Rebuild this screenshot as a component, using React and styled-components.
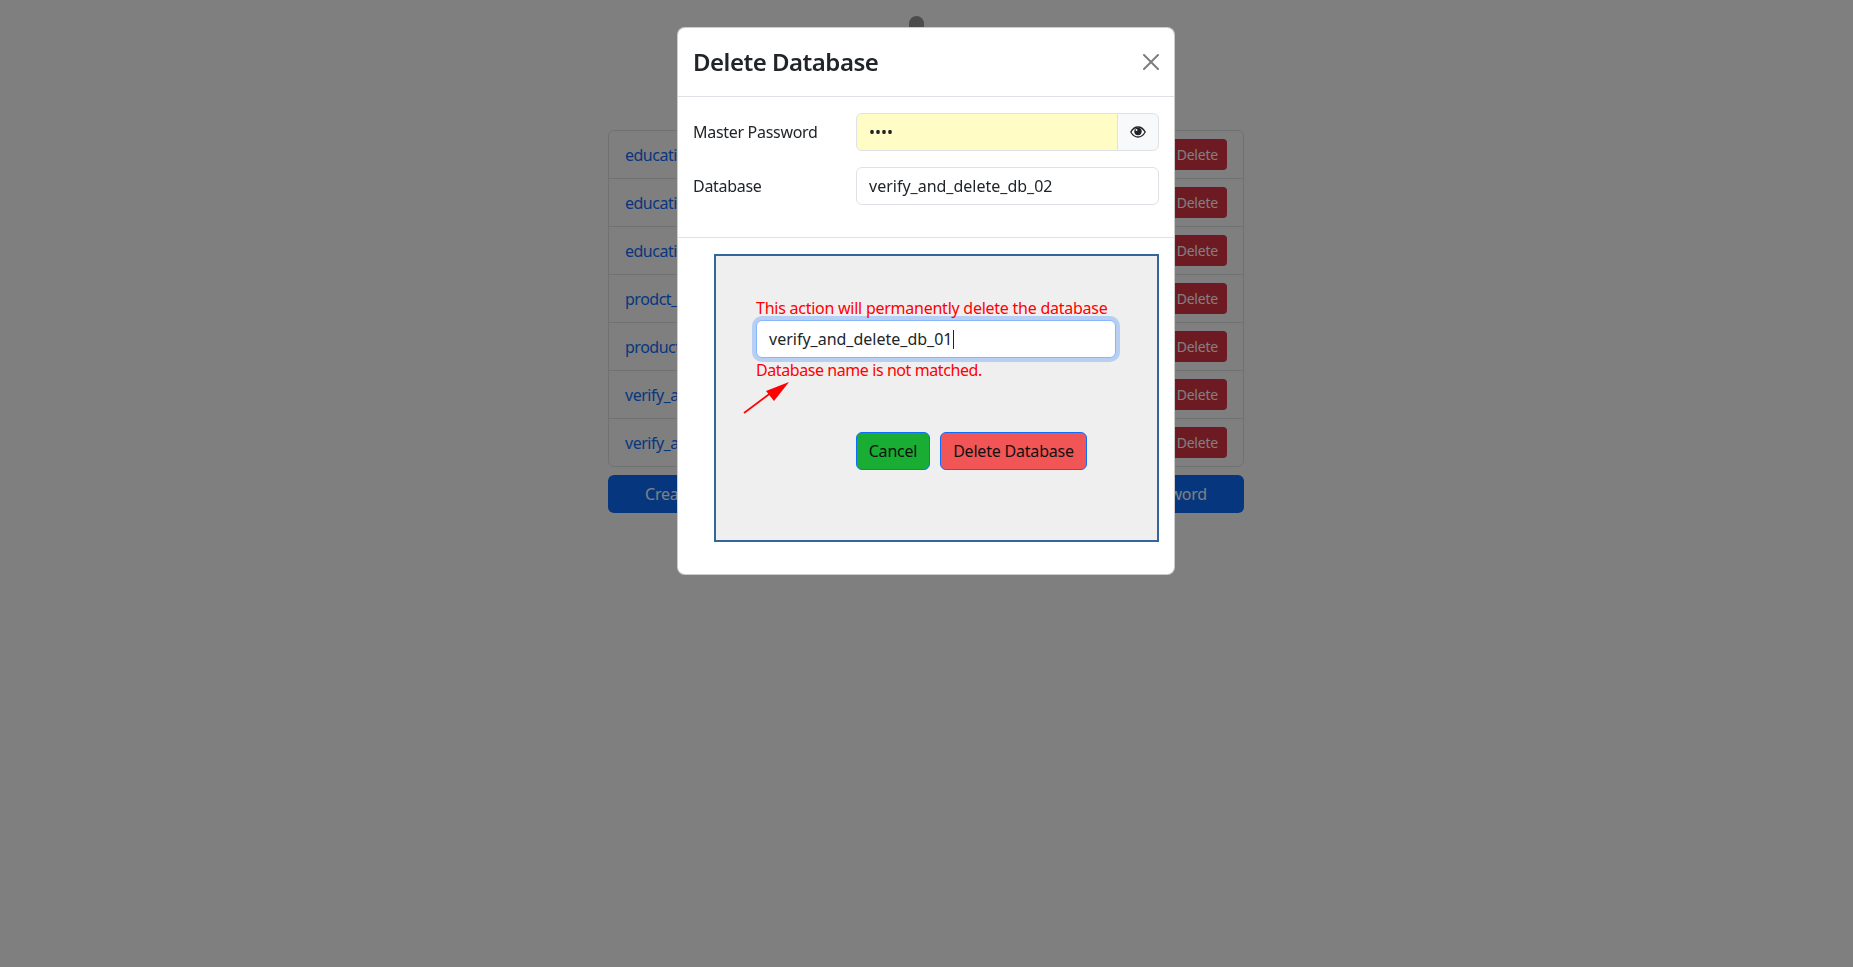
import React from "react";
import styled, { createGlobalStyle } from "styled-components";

const GlobalStyle = createGlobalStyle`
  html, body { margin: 0; padding: 0; background: #fff; }
  body {
    font-family: "Noto Sans", "Liberation Sans", sans-serif;
    font-size: 16px;
    line-height: 24px;
    color: #212529;
    letter-spacing: -0.2px;
    overflow: hidden;
  }
  * { box-sizing: border-box; }
`;

const Page = styled.div`
  width: 637px;
  padding-right: 1px;
  margin: 0 auto;
  height: 967px;
  display: flex;
  flex-direction: column;
  align-items: stretch;
`;

const LogoSlot = styled.div`
  height: 130px;
  padding: 16px 0 0 301px;
`;

const DbList = styled.div`
  border: 1px solid #dee2e6;
  border-radius: 6px;
  display: flex;
  flex-direction: column;
`;

const DbRow = styled.div`
  height: ${(p) => (p.$first ? "47px" : "48px")};
  display: flex;
  align-items: center;
  justify-content: space-between;
  padding: 0 16px;
  border-top: ${(p) => (p.$first ? "none" : "1px solid #dee2e6")};
`;

const DbLink = styled.a`
  color: #0d6efd;
  letter-spacing: -0.5px;
`;

const SmallDanger = styled.span`
  height: 31px;
  padding: 0 9px;
  display: flex;
  align-items: center;
  background: #dc3545;
  color: #fff;
  border-radius: 4px;
  font-size: 14px;
`;

const ActionRow = styled.div`
  margin-top: 8px;
  display: grid;
  grid-template-columns: 1fr 1fr;
  gap: 8px;
`;

const ActionButton = styled.div`
  height: 38px;
  border-radius: 6px;
  background: #0d6efd;
  color: #fff;
  display: flex;
  align-items: center;
  padding: 0 37px;
  justify-content: ${(p) => (p.$end ? "flex-end" : "flex-start")};
`;

const Backdrop = styled.div`
  position: fixed;
  inset: 0;
  background: rgba(0, 0, 0, 0.5);
  display: flex;
  align-items: flex-start;
  padding: 27px 0 0 677px;
`;

const Modal = styled.div`
  width: 498px;
  background: #fff;
  border: 1px solid rgba(0, 0, 0, 0.2);
  border-radius: 8px;
  display: flex;
  flex-direction: column;
`;

const ModalHeader = styled.div`
  height: 69px;
  padding: 0 15px;
  display: flex;
  align-items: center;
  justify-content: space-between;
  border-bottom: 1px solid #dee2e6;
`;

const ModalTitle = styled.h1`
  margin: 0;
  font-size: 24px;
  font-weight: 600;
  line-height: 36px;
  letter-spacing: -0.5px;
`;

const CloseButton = styled.button`
  border: 0;
  padding: 0;
  background: none;
  width: 16px;
  height: 16px;
  display: flex;
  opacity: 0.5;
`;

const ModalBody = styled.div`
  padding: 16px 15px;
  border-bottom: 1px solid #dee2e6;
`;

const FormRow = styled.div`
  display: grid;
  grid-template-columns: 163px 1fr;
  align-items: center;
  margin-bottom: 16px;
`;

const Label = styled.label`
  color: #212529;
  letter-spacing: -0.3px;
`;

const InputGroup = styled.div`
  display: flex;
`;

const TextInput = styled.input`
  flex: 1;
  min-width: 0;
  width: 100%;
  height: 38px;
  padding: 0 12px;
  font: inherit;
  letter-spacing: 0;
  color: #212529;
  outline: none;
  border: 1px solid #dee2e6;
  border-radius: ${(p) => (p.$grouped ? "6px 0 0 6px" : "6px")};
  background: ${(p) => (p.$autofill ? "#fffcc6" : "#fff")};
`;

const Addon = styled.span`
  width: 42px;
  height: 38px;
  margin-left: -1px;
  display: flex;
  align-items: center;
  justify-content: center;
  background: #f8f9fa;
  border: 1px solid #dee2e6;
  border-radius: 0 6px 6px 0;
`;

const ConfirmWrap = styled.div`
  padding: 16px 15px 32px 36px;
`;

const ConfirmBox = styled.div`
  position: relative;
  height: 288px;
  padding: 40px 40px 0;
  border: 2px solid #336699;
  background: #efefef;
`;

const DangerText = styled.div`
  color: #ff0000;
  white-space: nowrap;
  letter-spacing: ${(p) => p.$spacing};
`;

const FocusedField = styled.div`
  width: 360px;
  height: 38px;
  padding: 0 12px;
  display: flex;
  align-items: center;
  letter-spacing: 0;
  background: #fff;
  border: 1px solid #86b7fe;
  border-radius: 6px;
  box-shadow: 0 0 0 4px rgba(13, 110, 253, 0.25);
`;

const Caret = styled.span`
  width: 1px;
  height: 19px;
  margin-left: 1px;
  background: #212529;
`;

const ArrowMark = styled.svg`
  position: absolute;
  left: 26px;
  top: 124px;
`;

const ButtonRow = styled.div`
  display: flex;
  gap: 10px;
  margin: 50px 0 0 100px;
`;

const ConfirmButton = styled.button`
  width: ${(p) => p.$width}px;
  height: 38px;
  padding: 0;
  font: inherit;
  letter-spacing: inherit;
  color: #111;
  background: ${(p) => p.$bg};
  border: 1px solid #0d6efd;
  border-radius: 6px;
`;

const rows = [
  "education_01",
  "education_02",
  "education_03",
  "prodct_db",
  "product_db",
  "verify_and_delete_db_01",
  "verify_and_delete_db_02",
];

export default function App() {
  return (
    <>
      <GlobalStyle />
      <Page>
        <LogoSlot>
          <svg width="15" height="30" viewBox="0 0 15 30">
            <rect width="15" height="30" rx="7.5" fill="#989898" />
          </svg>
        </LogoSlot>
        <DbList>
          {rows.map((name, i) => (
            <DbRow key={name} $first={i === 0}>
              <DbLink>{name}</DbLink>
              <SmallDanger>Delete</SmallDanger>
            </DbRow>
          ))}
        </DbList>
        <ActionRow>
          <ActionButton>Create Database</ActionButton>
          <ActionButton $end>Set Master Password</ActionButton>
        </ActionRow>
      </Page>
      <Backdrop>
        <Modal>
          <ModalHeader>
            <ModalTitle>Delete Database</ModalTitle>
            <CloseButton aria-label="Close">
              <svg width="16" height="16" viewBox="0 0 16 16">
                <path
                  fill="#000"
                  d="M.293.293a1 1 0 0 1 1.414 0L8 6.586 14.293.293a1 1 0 1 1 1.414 1.414L9.414 8l6.293 6.293a1 1 0 0 1-1.414 1.414L8 9.414l-6.293 6.293a1 1 0 0 1-1.414-1.414L6.586 8 .293 1.707a1 1 0 0 1 0-1.414z"
                />
              </svg>
            </CloseButton>
          </ModalHeader>
          <ModalBody>
            <FormRow>
              <Label>Master Password</Label>
              <InputGroup>
                <TextInput $grouped $autofill type="password" value="1234" readOnly />
                <Addon>
                  <svg width="16" height="12" viewBox="0 0 16 12">
                    <path
                      d="M.8 6C2.600 2.800 5 1 8 1s5.400 1.800 7.200 5c-1.800 3.200-4.200 5-7.200 5S2.600 9.200.8 6z"
                      fill="#fff"
                      stroke="#212529"
                      strokeWidth="1.3"
                    />
                    <circle cx="8" cy="5.500" r="3.700" fill="#212529" />
                    <circle cx="6.500" cy="4" r="0.900" fill="#fff" />
                  </svg>
                </Addon>
              </InputGroup>
            </FormRow>
            <FormRow>
              <Label>Database</Label>
              <TextInput value="verify_and_delete_db_02" readOnly />
            </FormRow>
          </ModalBody>
          <ConfirmWrap>
            <ConfirmBox>
              <DangerText $spacing="-0.25px">This action will permanently delete the database</DangerText>
              <FocusedField>
                verify_and_delete_db_01
                <Caret />
              </FocusedField>
              <DangerText $spacing="-0.42px">Database name is not matched.</DangerText>
              <ArrowMark width="50" height="36" viewBox="0 0 50 36">
                <path d="M2 33 L30 12" stroke="#ff0000" strokeWidth="1.6" fill="none" />
                <path d="M47 2 L24 11 L32 21 Z" fill="#ff0000" />
              </ArrowMark>
              <ButtonRow>
                <ConfirmButton $width={74} $bg="#19ae33">Cancel</ConfirmButton>
                <ConfirmButton $width={147} $bg="#f25555">Delete Database</ConfirmButton>
              </ButtonRow>
            </ConfirmBox>
          </ConfirmWrap>
        </Modal>
      </Backdrop>
    </>
  );
}
